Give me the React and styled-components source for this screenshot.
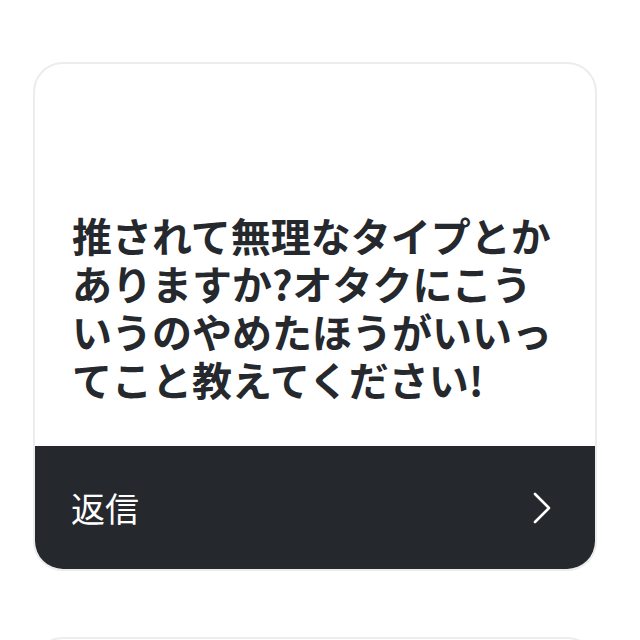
import React from "react";
import styled, { createGlobalStyle } from "styled-components";

const GlobalStyle = createGlobalStyle`
  html, body {
    margin: 0;
    padding: 0;
    background: #ffffff;
  }
  body {
    font-family: "Noto Sans CJK JP", "Noto Sans", sans-serif;
  }
`;

const Page = styled.div`
  width: 640px;
  height: 640px;
  overflow: hidden;
  padding: 62px 33px 0;
  box-sizing: border-box;
  display: flex;
  flex-direction: column;
  gap: 66px;
`;

const Card = styled.div`
  flex-shrink: 0;
  width: 564px;
  height: 509px;
  box-sizing: border-box;
  border: 2px solid #ebecee;
  border-radius: 30px;
  overflow: hidden;
  display: flex;
  flex-direction: column;
  background: #ffffff;
`;

const Question = styled.div`
  height: 382px;
  box-sizing: border-box;
  padding: 147px 0 0 37px;
`;

const QuestionText = styled.p`
  margin: 0;
  width: 484px;
  font-size: 40px;
  line-height: 48px;
  font-weight: 700;
  color: #25282c;
  line-break: anywhere;
`;

const ReplyBar = styled.div`
  flex: 1;
  background: #25282c;
  display: flex;
  align-items: center;
  justify-content: space-between;
  padding: 0 43px 0 36px;
`;

const ReplyLabel = styled.span`
  font-size: 34px;
  font-weight: 400;
  color: #ffffff;
  line-height: 1;
`;

const Chevron = () => (
  <svg width="20" height="32" viewBox="0 0 20 32" fill="none">
    <path
      d="M3 2 L17 16 L3 30"
      stroke="#ffffff"
      strokeWidth="2.6"
      strokeLinecap="round"
      strokeLinejoin="round"
    />
  </svg>
);

const App = () => {
  return (
    <>
      <GlobalStyle />
      <Page>
        <Card>
          <Question>
            <QuestionText>
              推されて無理なタイプとかありますか?オタクにこういうのやめたほうがいいってこと教えてください!
            </QuestionText>
          </Question>
          <ReplyBar>
            <ReplyLabel>返信</ReplyLabel>
            <Chevron />
          </ReplyBar>
        </Card>
        <Card />
      </Page>
    </>
  );
};

export default App;
